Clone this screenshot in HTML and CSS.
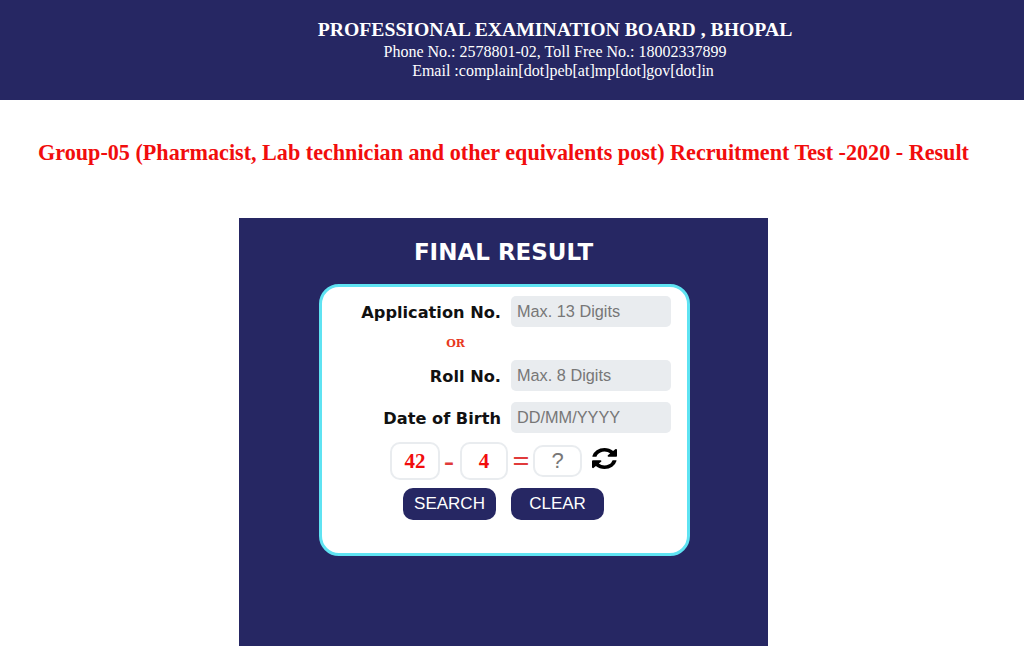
FILE: index.html
```html
<!DOCTYPE html>
<html lang="en">
<head>
    <meta charset="UTF-8">
    <meta name="viewport" content="width=device-width, initial-scale=1.0">
    <title>Final Result</title>
    <link rel="stylesheet" href="styles.css">
</head>
<body>
    <div class="header">
        <h1>PROFESSIONAL EXAMINATION BOARD , BHOPAL</h1>
        <div class="phone">Phone No.: 2578801-02, Toll Free No.: 18002337899</div>
        <div class="email">Email :complain[dot]peb[at]mp[dot]gov[dot]in</div>
    </div>
    <div class="container">
        <h2 class="exam-title">Group-05 (Pharmacist, Lab technician and other equivalents post) Recruitment Test -2020 - Result</h2>
        <div class="panel">
            <h3>FINAL RESULT</h3>
            <form class="card">
                <div class="form-row">
                    <label for="app_no">Application No.</label>
                    <input type="text" id="app_no" placeholder="Max. 13 Digits">
                </div>
                <div class="or-row">OR</div>
                <div class="form-row">
                    <label for="roll_no">Roll No.</label>
                    <input type="text" id="roll_no" placeholder="Max. 8 Digits">
                </div>
                <div class="form-row form-row-last">
                    <label for="dob">Date of Birth</label>
                    <input type="text" id="dob" placeholder="DD/MM/YYYY">
                </div>
                <div class="captcha">
                    <span class="num num-first">42</span>
                    <span class="op op-minus">-</span>
                    <span class="num num-second">4</span>
                    <span class="op op-equal">=</span>
                    <input type="text" class="answer" placeholder="?">
                    <svg class="refresh" viewBox="128 128 1536 1536" preserveAspectRatio="none">
                        <path d="M1639 1056q0 5-1 7-64 268-268 434.5t-478 166.5q-146 0-282.5-55t-243.5-157l-129 129q-19 19-45 19t-45-19-19-45v-448q0-26 19-45t45-19h448q26 0 45 19t19 45-19 45l-137 137q71 66 161 102t187 36q134 0 250-65t186-179q11-17 53-117 8-23 30-23h192q13 0 22.5 9.5t9.5 22.5zm25-800v448q0 26-19 45t-45 19h-448q-26 0-45-19t-19-45 19-45l138-138q-148-137-349-137-134 0-250 65t-186 179q-11 17-53 117-8 23-30 23h-199q-13 0-22.5-9.5t-9.5-22.5v-7q65-268 270-434.5t480-166.5q146 0 284 55.5t245 156.5l130-129q19-19 45-19t45 19 19 45z"/>
                    </svg>
                </div>
                <div class="buttons">
                    <button type="button">SEARCH</button>
                    <button type="button">CLEAR</button>
                </div>
            </form>
        </div>
    </div>
</body>
</html>
```

FILE: styles.css
```css
body {
    margin: 0;
    padding: 0;
    background-color: #fff;
    font-family: "Liberation Serif", serif;
    overflow: hidden;
}
.header {
    height: 100px;
    box-sizing: border-box;
    padding: 18px 0 0 86px;
    background-color: #262763;
    color: #fff;
    text-align: center;
    font-size: 16px;
    line-height: 20px;
}
.header h1 {
    margin: 0;
    font-size: 19.7px;
    line-height: 22px;
}
.phone {
    padding-top: 2px;
    line-height: 19px;
}
.email {
    padding-left: 16px;
}
.container {
    width: 1007px;
}
.exam-title {
    margin: 41px 0 53px;
    color: #f10d0d;
    text-align: center;
    font-size: 22.15px;
    line-height: 24px;
}
.panel {
    width: 529px;
    height: 428px;
    margin: 0 auto;
    padding-top: 19px;
    box-sizing: border-box;
    background-color: #262763;
}
.panel h3 {
    margin: 0 0 17px;
    color: #fff;
    text-align: center;
    font-family: "DejaVu Sans", sans-serif;
    font-size: 23px;
    line-height: 30px;
}
.card {
    width: 371px;
    height: 272px;
    margin-left: 80px;
    padding: 9px 0 0;
    box-sizing: border-box;
    background-color: #fff;
    border: 3px solid #5fe3f2;
    border-radius: 20px;
}
.form-row {
    display: flex;
    align-items: center;
    gap: 10px;
    margin-bottom: 11px;
}
.form-row label {
    width: 179px;
    padding-top: 2px;
    text-align: right;
    font-family: "DejaVu Sans", sans-serif;
    font-weight: bold;
    font-size: 16.2px;
    color: #111;
}
.form-row input {
    width: 160px;
    height: 31px;
    padding: 0 6px;
    box-sizing: border-box;
    border: none;
    border-radius: 5px;
    background-color: #e9ecef;
    font-family: "Liberation Sans", sans-serif;
    font-size: 16.3px;
}
.form-row-last {
    margin-bottom: 9px;
}
input::placeholder {
    color: #777;
    opacity: 1;
}
.or-row {
    width: 267px;
    margin: 0 0 10px;
    text-align: center;
    color: #e8391d;
    font-family: "DejaVu Serif", serif;
    font-size: 11px;
    font-weight: bold;
    line-height: 12px;
}
.captcha {
    display: flex;
    align-items: center;
    height: 38px;
    padding-left: 68px;
}
.num {
    height: 38px;
    box-sizing: border-box;
    border: 2px solid #e9ecef;
    border-radius: 10px;
    color: #f10d0d;
    text-align: center;
    font-size: 21px;
    font-weight: bold;
    line-height: 34px;
}
.num-first {
    width: 50px;
}
.num-second {
    width: 48px;
}
.op {
    text-align: center;
    color: #e03a3a;
    font-size: 30px;
    font-weight: bold;
    line-height: 34px;
}
.op-minus {
    width: 18px;
    margin-right: 2px;
}
.op-equal {
    width: 25px;
    padding-left: 1px;
    box-sizing: border-box;
}
.answer {
    width: 49px;
    height: 32px;
    padding: 0;
    box-sizing: border-box;
    border: 2px solid #e9ecef;
    border-radius: 10px;
    text-align: center;
    font-family: "Liberation Sans", sans-serif;
    font-size: 22px;
}
.refresh {
    width: 25px;
    height: 21px;
    margin: -6px 0 0 10px;
    fill: #000;
}
.buttons {
    display: flex;
    gap: 15px;
    margin-top: 8px;
    padding-left: 81px;
}
.buttons button {
    width: 93px;
    height: 32px;
    padding: 0;
    border: none;
    border-radius: 10px;
    background-color: #262763;
    color: #fff;
    font-family: "Liberation Sans", sans-serif;
    font-size: 17px;
}
```
